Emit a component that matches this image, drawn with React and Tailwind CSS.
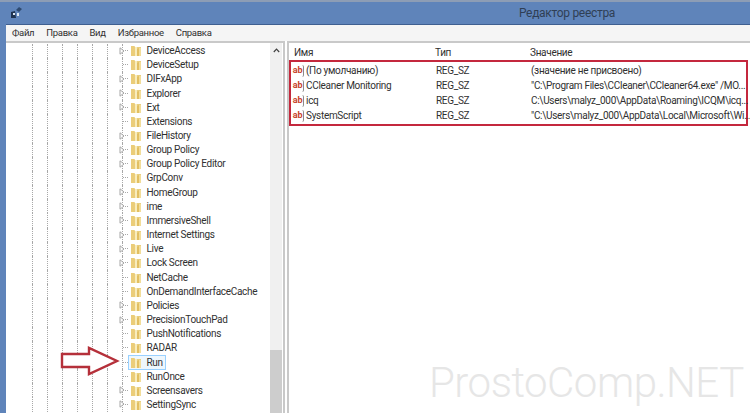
const rows = [
  ['DeviceAccess', true], ['DeviceSetup', false], ['DIFxApp', true], ['Explorer', true], ['Ext', true], ['Extensions', false],
  ['FileHistory', true], ['Group Policy', true], ['Group Policy Editor', true], ['GrpConv', false], ['HomeGroup', true], ['ime', true],
  ['ImmersiveShell', true], ['Internet Settings', true], ['Live', true], ['Lock Screen', true], ['NetCache', false],
  ['OnDemandInterfaceCache', false], ['Policies', true], ['PrecisionTouchPad', true], ['PushNotifications', false], ['RADAR', false],
  ['Run', false], ['RunOnce', false], ['Screensavers', true], ['SettingSync', true],
];

const values = [
  ['(По умолчанию)', '(значение не присвоено)'],
  ['CCleaner Monitoring', '"C:\\Program Files\\CCleaner\\CCleaner64.exe" /MO...'],
  ['icq', 'C:\\Users\\malyz_000\\AppData\\Roaming\\ICQM\\icq...'],
  ['SystemScript', '"C:\\Users\\malyz_000\\AppData\\Local\\Microsoft\\Wi...'],
];

function Folder() {
  return (
    <svg width="12" height="13" viewBox="0 0 12 13" className="shrink-0">
      <path d="M1 2h3l1 1h6v9H1z" fill="#e9cf80" />
      <path d="M1 2h3l1 1v9H1z" fill="#ebcd7a" />
      <path d="M5 3h2v9H5z" fill="#f8ecbc" />
      <path d="M7 5l2-1v8H7z" fill="#e2bf62" />
      <path d="M9 4h2v8H9z" fill="#f2dd9a" />
    </svg>
  );
}

function TreeRow({ name, arrow }) {
  const selected = name === 'Run';
  return (
    <div className="flex h-[14.16px] items-center pl-[32px]">
      {[0, 1, 2, 3, 4, 5].map((i) => (
        <span key={i} className="h-full w-[15px] shrink-0 border-l border-dotted border-[#a8a8a8]" />
      ))}
      <span className="flex h-full w-[6px] shrink-0 items-center border-l border-dotted border-[#a8a8a8]">
        <span className="w-full border-t border-dotted border-[#a8a8a8]" />
      </span>
      <span className="-ml-[10px] mr-[2px] flex w-[8px] shrink-0 justify-center">
        {arrow && (
          <svg width="6" height="8" viewBox="0 0 6 8">
            <path d="M1 .8 5 4 1 7.2z" fill="#fff" stroke="#a6a6a6" />
          </svg>
        )}
      </span>
      <span className={'-my-px flex h-[15px] items-center whitespace-nowrap border pl-[1px] pr-[2px] ' + (selected ? 'border-[#99d1ff] bg-[#eef7fd]' : 'border-transparent')}>
        <Folder />
        <span className="ml-[4.5px]">{name}</span>
      </span>
    </div>
  );
}

export default function App() {
  return (
    <div className="relative flex h-[413px] w-[750px] flex-col overflow-hidden bg-[#5f84ba] pl-[6px] font-['Roboto',sans-serif] text-[10px] tracking-[-0.3px] text-[#303030]">
      <div className="-ml-[6px] h-[2px] shrink-0 bg-[#8d9db5]" />
      <div className="relative flex h-[23px] shrink-0 items-center justify-center border-b border-[#3f5f90]">
        <svg width="13" height="13" viewBox="0 0 13 13" className="absolute left-[4px] top-[4px]">
          <path d="M1 6l4-1 1 7H1z" fill="#1f3350" />
          <path d="M6 4l3-3 3 2-3 3z" fill="#2e4a70" />
          <path d="M3 7h2v2H3zM7 7h2v3H7z" fill="#dbe6f2" />
        </svg>
        <span className="ml-[378px] text-[12px] text-[#2f3f55]">Редактор реестра</span>
      </div>
      <div className="flex h-[16px] shrink-0 items-center gap-[12px] bg-[#f5f5f5] pl-[6px] text-[9.5px]">
        <span>Файл</span>
        <span>Правка</span>
        <span>Вид</span>
        <span>Избранное</span>
        <span>Справка</span>
      </div>
      <div className="flex min-h-0 flex-1 bg-white">
        <div className="relative flex w-[279px] shrink-0 overflow-hidden border-t-2 border-r-2 border-[#c9c9c9] pr-[1px]">
          <div className="-ml-[6px] min-w-0 flex-1 pt-[0.5px]">
            {rows.map(([name, arrow]) => (
              <TreeRow key={name} name={name} arrow={arrow} />
            ))}
          </div>
          <div className="flex w-[12px] shrink-0 flex-col bg-[#f0f0f0]">
            <span className="flex h-[14px] items-center justify-center">
              <svg width="7" height="5" viewBox="0 0 7 5">
                <path d="M.8 4 3.5 1.2 6.2 4" fill="none" stroke="#404040" strokeWidth="1.2" />
              </svg>
            </span>
            <div className="flex-1" />
            <div className="h-[63px] bg-[#cdcdcd]" />
          </div>
        </div>
        <div className="ml-[2px] min-w-0 flex-1 border-t-2 border-l-2 border-[#c9c9c9]">
          <div className="flex h-[17px] items-center pt-[2px] pl-[5px]">
            <span className="w-[141px] shrink-0">Имя</span>
            <span className="w-[95px] shrink-0">Тип</span>
            <span>Значение</span>
          </div>
          <div className="mr-[2px] border-2 border-[#c4283d] py-[1px]">
            {values.map(([name, value]) => (
              <div key={name} className="flex h-[15px] items-center whitespace-nowrap">
                <span className="ml-[1px] flex h-[12px] w-[12px] shrink-0 items-center justify-center rounded-[2px] border-r border-[#8a8a8a] bg-white text-[9px] font-bold leading-none text-[#c8442c]">ab</span>
                <span className="ml-[2px] w-[130px] shrink-0">{name}</span>
                <span className="w-[95px] shrink-0">REG_SZ</span>
                <span>{value}</span>
              </div>
            ))}
          </div>
        </div>
      </div>
      <svg width="60" height="30" viewBox="0 0 60 30" className="absolute left-[60px] top-[346px]">
        <path d="M2 8h27V2l28 13-28 13v-7H2z" fill="#fff" stroke="#b5303a" strokeWidth="2.4" />
      </svg>
      <span className="absolute left-[429px] top-[351px] text-[42px] font-light tracking-[-0.5px] text-[#e6e6e6]">ProstoComp.NET</span>
    </div>
  );
}
